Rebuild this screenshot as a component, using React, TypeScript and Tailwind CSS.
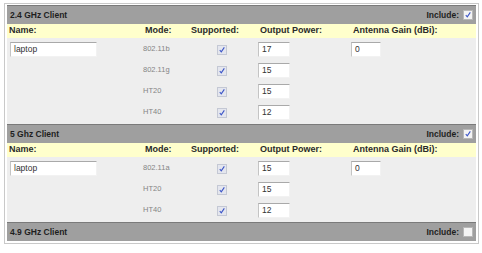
import React from "react";

type Row = { mode: string; power: string };

type Section = {
  title: string;
  include: boolean;
  name?: string;
  gain?: string;
  rows?: Row[];
};

const sections: Section[] = [
  {
    title: "2.4 GHz Client",
    include: true,
    name: "laptop",
    gain: "0",
    rows: [
      { mode: "802.11b", power: "17" },
      { mode: "802.11g", power: "15" },
      { mode: "HT20", power: "15" },
      { mode: "HT40", power: "12" },
    ],
  },
  {
    title: "5 Ghz Client",
    include: true,
    name: "laptop",
    gain: "0",
    rows: [
      { mode: "802.11a", power: "15" },
      { mode: "HT20", power: "15" },
      { mode: "HT40", power: "12" },
    ],
  },
  { title: "4.9 GHz Client", include: false },
];

function Check({ on, light }: { on: boolean; light?: boolean }) {
  return (
    <span
      className={`flex h-[10px] w-[10px] items-center justify-center border ${
        light
          ? "border-[#c4c8d4] bg-[#e4e6ee]"
          : "border-[#b8b8b8] bg-[#f4f4f4]"
      }`}
    >
      {on && (
        <svg viewBox="0 0 10 10" className="h-[8px] w-[8px]">
          <path
            d="M2.2 5.2 L4.1 7.3 L7.9 1.8"
            fill="none"
            stroke="#3d56c8"
            strokeWidth="1.4"
          />
        </svg>
      )}
    </span>
  );
}

function Field({ value, w }: { value: string; w: string }) {
  return (
    <div
      className={`flex h-[15px] items-center border border-t-[#a9a9a9] border-l-[#c4c4c4] border-r-[#f2f2f2] border-b-[#f2f2f2] bg-white pl-[3px] text-[8.5px] text-[#333] ${w}`}
    >
      {value}
    </div>
  );
}

function Header({ title, include }: { title: string; include: boolean }) {
  return (
    <div className="flex h-[19px] items-center justify-between border-t border-[#7a7a7a] bg-[#9f9f9f] pl-[3px] pr-[3px] text-[8.5px] font-bold text-[#1e1e1e]">
      <span>{title}</span>
      <span className="flex items-center gap-[4px]">
        Include:
        <Check on={include} />
      </span>
    </div>
  );
}

function Labels() {
  return (
    <div className="grid h-[14px] grid-cols-[136px_46px_69px_93px_1fr] items-center bg-[#ffffcc] pl-[2px] text-[9px] font-bold text-[#2a2a2a]">
      <span>Name:</span>
      <span>Mode:</span>
      <span>Supported:</span>
      <span>Output Power:</span>
      <span>Antenna Gain (dBi):</span>
    </div>
  );
}

export default function App() {
  return (
    <div className="h-[253px] w-[482px] bg-white pt-[3px] pl-[4px] font-['Liberation_Sans',Arial,sans-serif]">
      <div className="w-[475px] border border-[#c9c9c9] p-[2px] pt-[1px]">
        {sections.map((s) => (
          <div key={s.title}>
            <Header title={s.title} include={s.include} />
            {s.rows && (
              <>
                <Labels />
                <div className="bg-[#eeeeee] py-[1px]">
                  {s.rows.map((r, i) => (
                    <div
                      key={r.mode}
                      className="grid h-[21px] grid-cols-[136px_46px_69px_93px_1fr] items-center"
                    >
                      <div className="pl-[3px]">
                        {i === 0 && <Field value={s.name!} w="w-[87px]" />}
                      </div>
                      <span className="-mt-[2px] text-[7.5px] text-[#858585]">{r.mode}</span>
                      <div className="pl-[28px]">
                        <Check on light />
                      </div>
                      <Field value={r.power} w="w-[32px]" />
                      <div>{i === 0 && <Field value={s.gain!} w="w-[30px]" />}</div>
                    </div>
                  ))}
                </div>
              </>
            )}
          </div>
        ))}
      </div>
    </div>
  );
}
